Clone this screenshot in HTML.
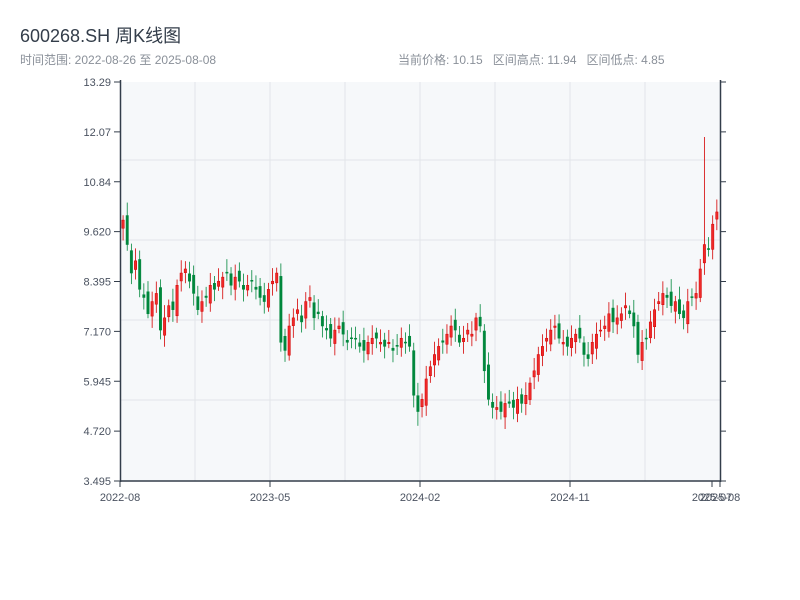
<!DOCTYPE html>
<html><head><meta charset="utf-8"><style>
body{margin:0;width:800px;height:600px;background:#fff;font-family:"Liberation Sans","Noto Sans CJK SC",sans-serif;overflow:hidden;position:relative}
.t{position:absolute;left:20px;top:22px;font-size:18px;color:#333d4a}
.s{position:absolute;left:20px;top:51px;font-size:12px;color:#8a9099}
.r{position:absolute;left:398px;top:51px;font-size:12px;color:#8a9099}
</style></head><body>
<div class="t">600268.SH 周K线图</div>
<div class="s">时间范围: 2022-08-26 至 2025-08-08</div>
<div class="r">当前价格: 10.15&nbsp;&nbsp; 区间高点: 11.94&nbsp;&nbsp; 区间低点: 4.85</div>
<svg id="c" width="800" height="600" style="position:absolute;left:0;top:0" font-family="Liberation Sans, sans-serif" font-size="11" fill="#333d4a"></svg>
<script>
var s=document.getElementById('c'),h='';
function Y(p){return 481-(p-3.495)/(13.29-3.495)*399;}
h+='<rect x="120" y="82" width="600" height="399" fill="#f6f8fa"/>';
[160,240,320,400].forEach(function(y){h+='<line x1="120" x2="720" y1="'+y+'" y2="'+y+'" stroke="#e2e5e9"/>';});
[195,270,345,420,495,570,645].forEach(function(x){h+='<line y1="82" y2="481" x1="'+x+'" x2="'+x+'" stroke="#e2e5e9"/>';});
var labs=['13.29','12.07','10.84','9.620','8.395','7.170','5.945','4.720','3.495'];
labs.forEach(function(l,i){var y=82+i*49.875;h+='<line x1="114" x2="120" y1="'+y+'" y2="'+y+'" stroke="#333d4a"/><line x1="720" x2="726" y1="'+y+'" y2="'+y+'" stroke="#333d4a"/><text x="111" y="'+(y+4)+'" text-anchor="end" fill="#4a5260">'+l+'</text>';});
h+='<line x1="120.5" x2="120.5" y1="80" y2="482" stroke="#333d4a" stroke-width="1.5"/><line x1="720.5" x2="720.5" y1="80" y2="482" stroke="#333d4a" stroke-width="1.5"/><line x1="120" x2="721" y1="481" y2="481" stroke="#333d4a" stroke-width="1.5"/>';
[[120,'2022-08'],[270,'2023-05'],[420,'2024-02'],[570,'2024-11'],[712,'2025-07'],[720,'2025-08']].forEach(function(a){h+='<line x1="'+a[0]+'" x2="'+a[0]+'" y1="481" y2="487" stroke="#333d4a"/><text x="'+a[0]+'" y="501" text-anchor="middle" fill="#4a5260">'+a[1]+'</text>';});
var c=[9.9,9.3,8.6,8.9,8.2,8.0,7.6,7.9,8.1,7.2,7.5,7.8,7.7,8.3,8.6,8.7,8.4,8.1,7.7,7.9,8.0,8.3,8.2,8.4,8.5,8.6,8.3,8.5,8.4,8.2,8.3,8.4,8.2,8.0,7.9,8.2,8.4,8.6,6.9,6.7,7.3,7.5,7.7,7.4,7.9,8.0,7.5,7.6,7.3,7.2,7.0,7.2,7.3,7.1,6.9,7.0,7.0,6.8,6.7,6.9,7.0,7.0,6.9,6.8,6.9,6.7,6.8,7.0,6.9,6.8,5.6,5.2,5.5,6.0,6.3,6.6,6.8,6.9,7.1,7.3,7.2,6.9,7.0,7.2,7.1,7.5,7.3,6.2,5.5,5.3,5.3,5.2,5.4,5.4,5.3,5.5,5.4,5.6,5.9,6.2,6.6,6.8,7.0,7.2,7.3,7.0,6.9,6.8,7.0,7.1,7.0,6.6,6.5,6.9,7.1,7.2,7.3,7.6,7.4,7.5,7.6,7.8,7.6,7.3,6.6,6.9,7.0,7.4,7.7,7.9,8.1,8.0,7.8,7.9,7.6,7.5,7.9,8.0,8.1,8.7,9.3,9.2,9.8,10.1];
var n=c.length,dx=600/(n+0.5);
for(var i=0;i<n;i++){var cl=c[i],op=i==0?9.7:c[i-1]+(Math.sin(i*2.3)*0.15);var hi=Math.max(op,cl)+0.12+Math.abs(Math.sin(i*1.7))*0.2,lo=Math.min(op,cl)-0.1-Math.abs(Math.cos(i*1.3))*0.2;
if(i==n-4){hi=11.94;}if(i==71)lo=4.85;
var up=cl>=op,col=up?'#d40000':'#00873c',x=121+i*dx+dx/2;
var yt=Y(Math.max(op,cl)),yb=Y(Math.min(op,cl));if(yb-yt<1)yb=yt+1;
h+='<line x1="'+x+'" x2="'+x+'" y1="'+Y(hi)+'" y2="'+Y(lo)+'" stroke="'+col+'" stroke-width="0.8"/>';
h+='<rect x="'+(x-1.2)+'" y="'+yt+'" width="2.4" height="'+(yb-yt)+'" fill="'+(up?'#ee2a2a':'#00873c')+'" stroke="'+col+'" stroke-width="0.5"/>';}
s.innerHTML=h;
</script>
</body></html>
